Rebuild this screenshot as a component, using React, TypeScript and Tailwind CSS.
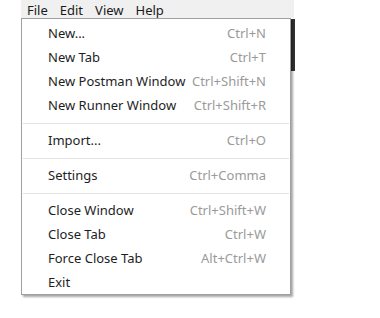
import React from "react";

type Entry = { label: string; shortcut: string } | "sep";

const entries: Entry[] = [
  { label: "New...", shortcut: "Ctrl+N" },
  { label: "New Tab", shortcut: "Ctrl+T" },
  { label: "New Postman Window", shortcut: "Ctrl+Shift+N" },
  { label: "New Runner Window", shortcut: "Ctrl+Shift+R" },
  "sep",
  { label: "Import...", shortcut: "Ctrl+O" },
  "sep",
  { label: "Settings", shortcut: "Ctrl+Comma" },
  "sep",
  { label: "Close Window", shortcut: "Ctrl+Shift+W" },
  { label: "Close Tab", shortcut: "Ctrl+W" },
  { label: "Force Close Tab", shortcut: "Alt+Ctrl+W" },
  { label: "Exit", shortcut: "" },
];

const topMenus = ["File", "Edit", "View", "Help"];

export default function App() {
  return (
    <div className="relative w-[380px] h-[318px] bg-white overflow-hidden font-['Noto_Sans',sans-serif]">
      {/* menu bar */}
      <div className="ml-[21px] w-[273px] h-[18px] bg-[#f0f0f0] flex items-center pt-[3px] text-[13px] text-[#1a1a1a] leading-none">
        {topMenus.map((m) => (
          <span key={m} className="px-[6px]">
            {m}
          </span>
        ))}
      </div>

      {/* app window behind */}
      <div className="absolute left-[291px] top-[19px] w-[4px] h-[52px] bg-[#333]" />

      {/* dropdown */}
      <div className="absolute left-[21px] top-[18px] w-[270px] h-[277px] bg-white border border-[#a0a0a0] shadow-[2px_2px_2px_rgba(0,0,0,0.35)] pt-[3px]">
        {entries.map((e, i) =>
          e === "sep" ? (
            <div key={i} className="h-[11px] flex items-center px-[1px]">
              <div className="w-full border-t border-[#e3e3e3]" />
            </div>
          ) : (
            <div key={i} className="h-[24px] flex items-center justify-between pl-[26px] pr-[24px] text-[13px]">
              <span className="text-[#1e1e1e]">{e.label}</span>
              <span className="text-[#9a9a9a]">{e.shortcut}</span>
            </div>
          )
        )}
      </div>
    </div>
  );
}
